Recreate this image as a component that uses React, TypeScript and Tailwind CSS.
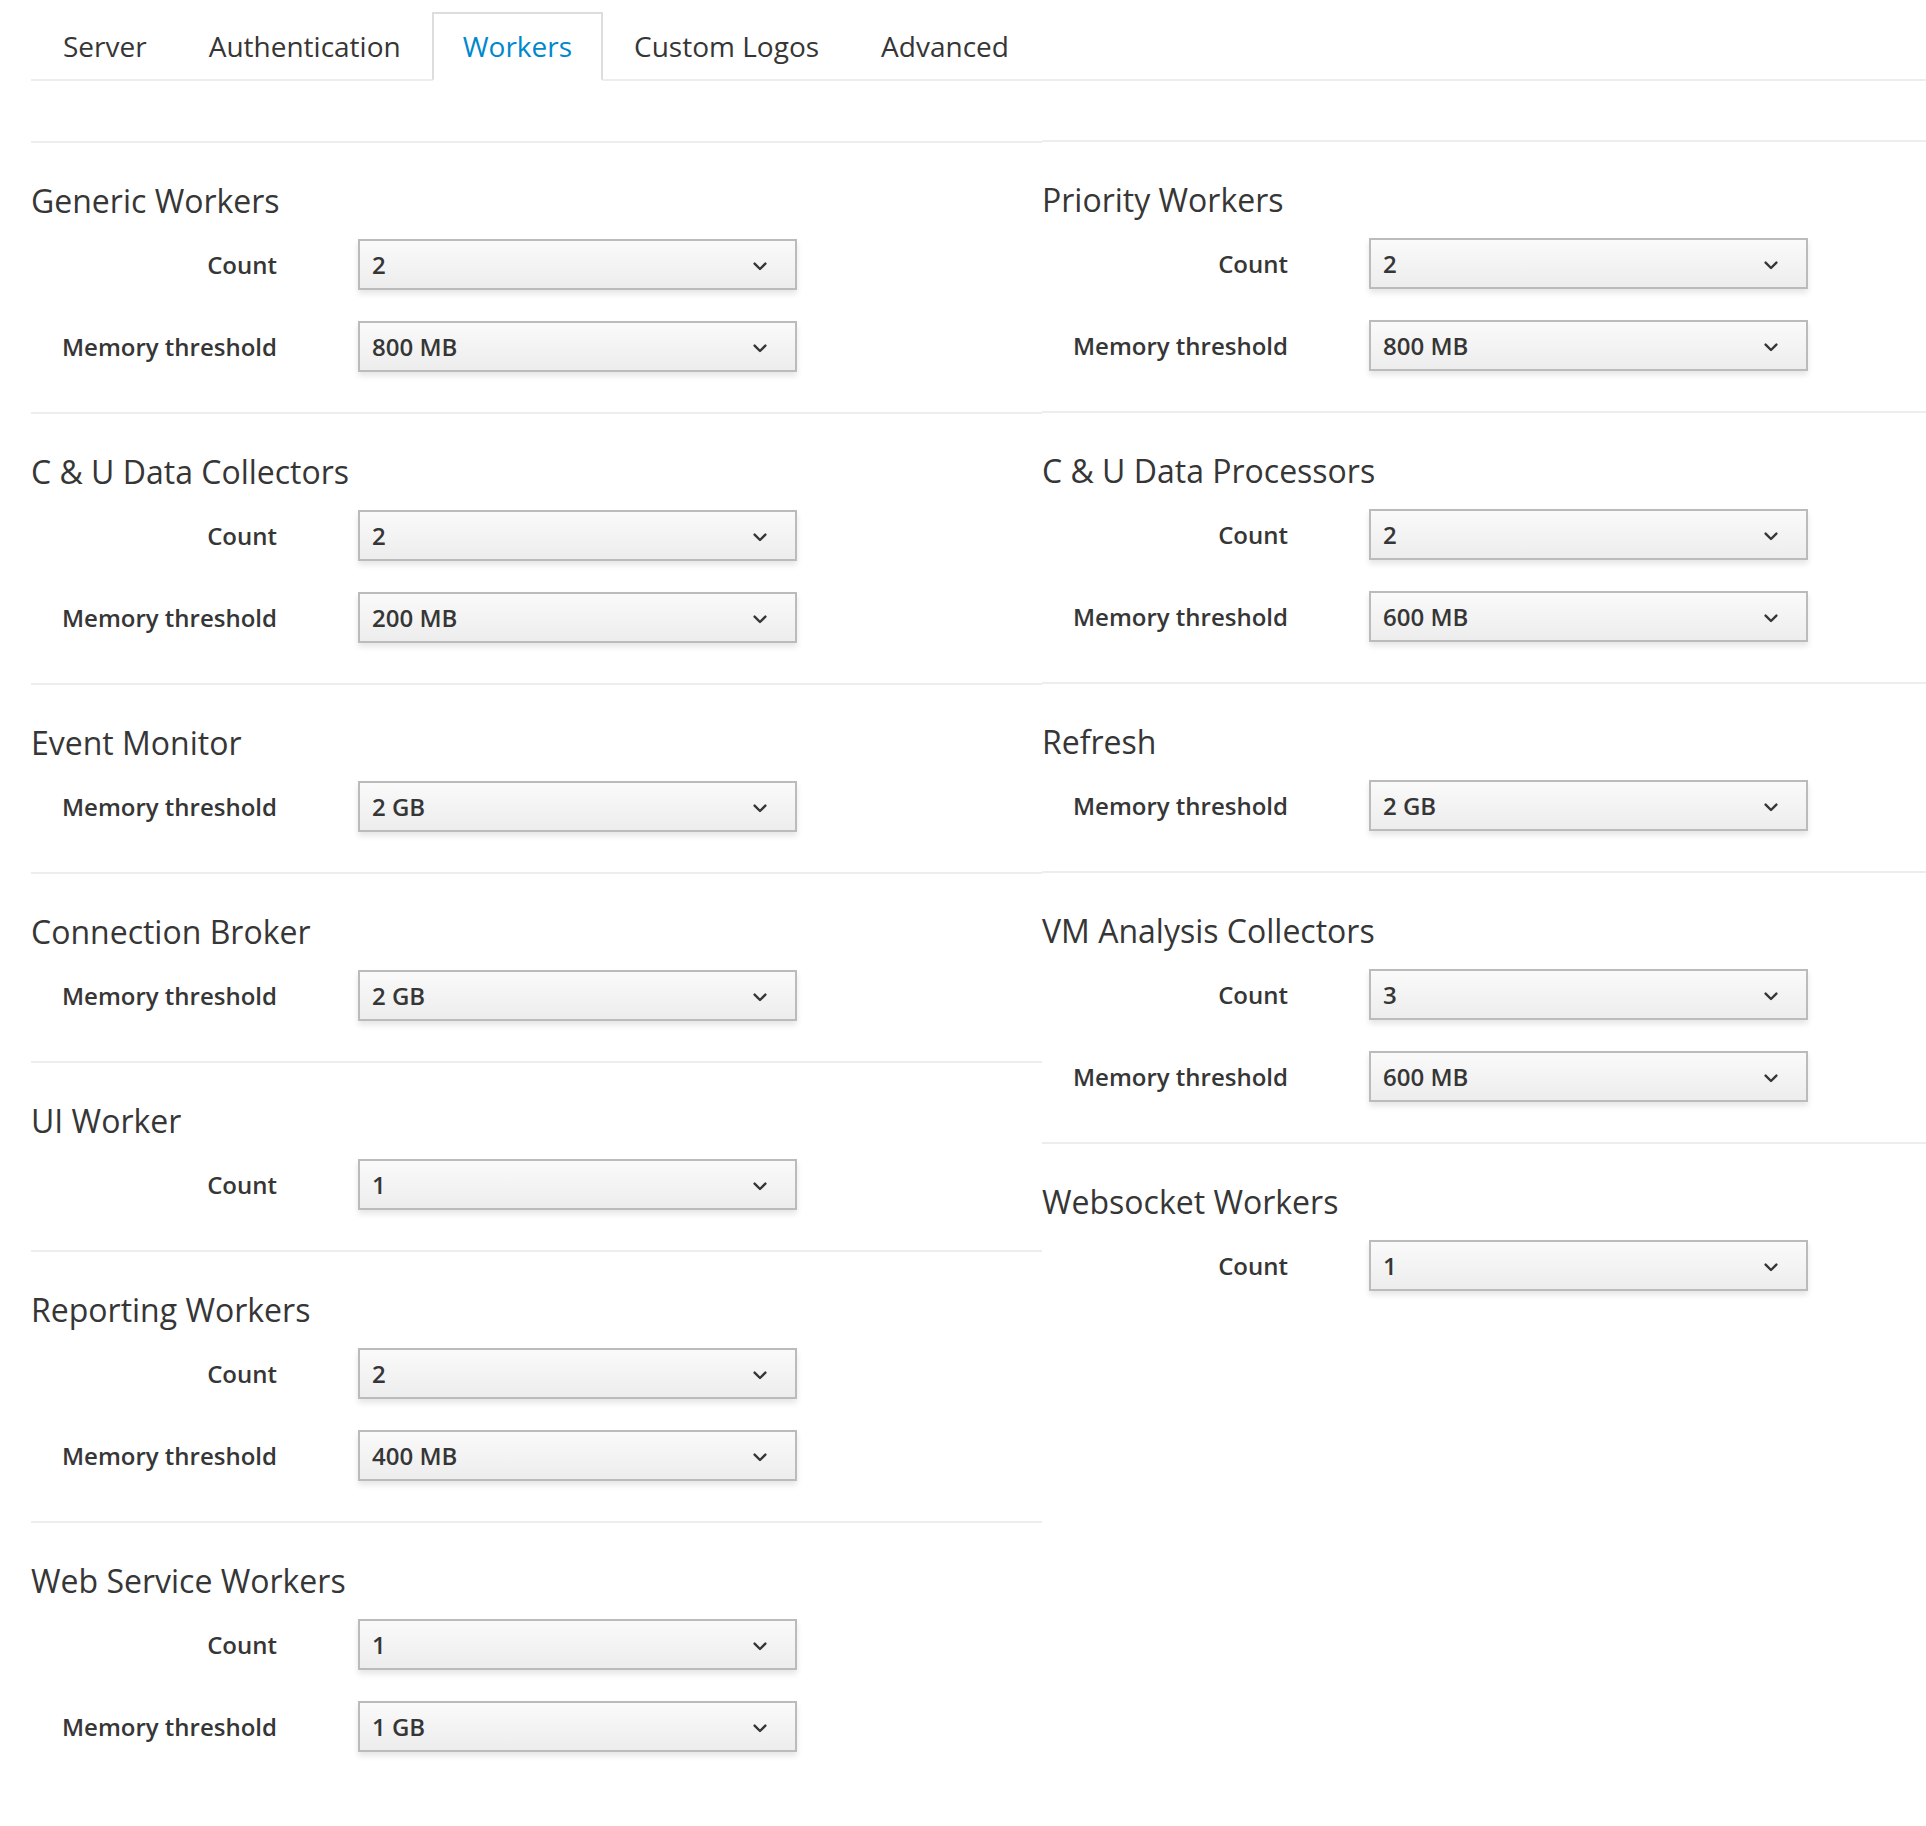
import React from "react";

type Row = [label: string, value: string];

interface Section {
  title: string;
  rows: Row[];
}

const TABS = ["Server", "Authentication", "Workers", "Custom Logos", "Advanced"];

const LEFT: Section[] = [
  { title: "Generic Workers", rows: [["Count", "2"], ["Memory threshold", "800 MB"]] },
  { title: "C & U Data Collectors", rows: [["Count", "2"], ["Memory threshold", "200 MB"]] },
  { title: "Event Monitor", rows: [["Memory threshold", "2 GB"]] },
  { title: "Connection Broker", rows: [["Memory threshold", "2 GB"]] },
  { title: "UI Worker", rows: [["Count", "1"]] },
  { title: "Reporting Workers", rows: [["Count", "2"], ["Memory threshold", "400 MB"]] },
  { title: "Web Service Workers", rows: [["Count", "1"], ["Memory threshold", "1 GB"]] },
];

const RIGHT: Section[] = [
  { title: "Priority Workers", rows: [["Count", "2"], ["Memory threshold", "800 MB"]] },
  { title: "C & U Data Processors", rows: [["Count", "2"], ["Memory threshold", "600 MB"]] },
  { title: "Refresh", rows: [["Memory threshold", "2 GB"]] },
  { title: "VM Analysis Collectors", rows: [["Count", "3"], ["Memory threshold", "600 MB"]] },
  { title: "Websocket Workers", rows: [["Count", "1"]] },
];

function Chevron() {
  return (
    <svg width="14" height="9" viewBox="0 0 14 9" fill="none" aria-hidden>
      <path d="M1.6 1.6 L7 7 L12.4 1.6" stroke="#363636" strokeWidth="2.4" strokeLinecap="round" strokeLinejoin="round" />
    </svg>
  );
}

function SelectBox({ value }: { value: string }) {
  return (
    <button
      type="button"
      className="ml-[81px] flex h-[51px] w-[439px] items-center justify-between border-2 border-[#bbbbbb] bg-gradient-to-b from-[#fafafa] to-[#ededed] pl-[12px] pr-[28px] text-[24px] font-semibold text-[#363636] shadow-[0_4px_6px_rgba(3,3,3,0.1)]"
    >
      <span>{value}</span>
      <span className="mt-[3px]">
        <Chevron />
      </span>
    </button>
  );
}

function WorkerSection({ section }: { section: Section }) {
  return (
    <section className="border-t-2 border-[#ededed] pb-[40px] pt-[36px]">
      <h3 className="text-[32px] font-normal leading-[44px] text-[#363636]">{section.title}</h3>
      <div className="mt-[16px] flex flex-col gap-[31px]">
        {section.rows.map(([label, value]) => (
          <div key={label} className="flex items-center">
            <label className="w-[246px] text-right text-[24px] font-semibold text-[#363636]">{label}</label>
            <SelectBox value={value} />
          </div>
        ))}
      </div>
    </section>
  );
}

export default function App() {
  return (
    <div className="min-h-screen w-full overflow-hidden bg-white font-['Open_Sans',sans-serif] text-[#363636]">
      <div className="pl-[31px] pt-[12px]">
        <ul className="flex border-b-2 border-[#ededed] pl-[1px]">
          {TABS.map((tab) => {
            const active = tab === "Workers";
            return (
              <li
                key={tab}
                className={
                  active
                    ? "-mb-[2px] flex h-[69px] items-center border-2 border-[#dddddd] border-b-white bg-white px-[29px] pb-[2px] text-[28px] text-[#0088ce]"
                    : "-mb-[2px] flex h-[69px] items-center border-2 border-transparent px-[29px] pb-[2px] text-[28px] text-[#363636]"
                }
              >
                {tab}
              </li>
            );
          })}
        </ul>

        <div className="mt-[60px] flex">
          <div className="w-[1011px] shrink-0">
            {LEFT.map((s) => (
              <WorkerSection key={s.title} section={s} />
            ))}
          </div>
          <div className="-mt-[1px] w-[1010px] shrink-0">
            {RIGHT.map((s) => (
              <WorkerSection key={s.title} section={s} />
            ))}
          </div>
        </div>
      </div>
    </div>
  );
}
